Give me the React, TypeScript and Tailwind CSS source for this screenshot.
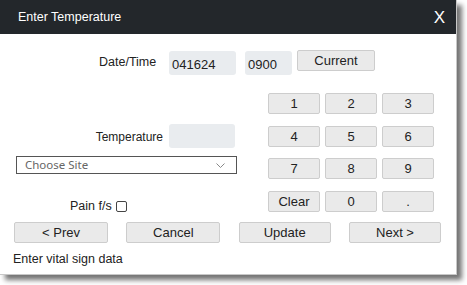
import React from 'react';

const btn =
    'flex items-center justify-center bg-[#eaeaea] border border-[#cdcdcd] rounded-[2px] text-[13px] text-[#222] leading-none';

const App: React.FC = () => {
    const keys = ['1', '2', '3', '4', '5', '6', '7', '8', '9', 'Clear', '0', '.'];

    return (
        <div className="w-[467px] h-[285px] bg-white font-['Liberation_Sans',Arial,sans-serif]">
            <div className="w-[457px] h-[275px] bg-white border-r border-b border-[#c8c8c8] shadow-[5px_5px_5px_rgba(0,0,0,0.55)] flex flex-col">
                {/* Title bar */}
                <div className="h-[34px] bg-[#23272b] flex items-center justify-between pl-[18px] pr-[11px]">
                    <span className="text-white text-[12.5px]">Enter Temperature</span>
                    <span className="text-white text-[17px] leading-none">X</span>
                </div>

                {/* Date / time */}
                <div className="flex items-start mt-[16px]">
                    <span className="ml-[99px] mt-[4px] w-[58px] text-[12.5px] leading-[16px] text-[#222]">Date/Time</span>
                    <div className="ml-[12px] mt-[1px] w-[67px] h-[24px] rounded-[3px] bg-[#e9ecef] pl-[3px] pt-[6px] text-[13px] leading-[16px] text-[#222]">
                        041624
                    </div>
                    <div className="ml-[9px] mt-[1px] w-[47px] h-[24px] rounded-[3px] bg-[#e9ecef] pl-[3px] pt-[6px] text-[13px] leading-[16px] text-[#222]">
                        0900
                    </div>
                    <button className={`${btn} ml-[5px] w-[78px] h-[21px]`}>Current</button>
                </div>

                {/* Middle section */}
                <div className="flex mt-[18px]">
                    <div className="w-[268px]">
                        <div className="flex items-start mt-[31px]">
                            <span className="w-[163px] text-right mt-[5px] text-[12px] leading-[16px] text-[#222]">Temperature</span>
                            <div className="ml-[6px] w-[66px] h-[24px] rounded-[3px] bg-[#e9ecef]" />
                        </div>
                        <div className="ml-[16px] mt-[8px] w-[221px] h-[18px] border border-[#555] flex items-center justify-between pl-[8px] pr-[11px]">
                            <span className="font-['Noto_Sans',sans-serif] text-[11.5px] text-[#666] leading-none">Choose Site</span>
                            <svg width="9" height="5" viewBox="0 0 9 5" fill="none" stroke="#888" strokeWidth="1">
                                <path d="M0.5 0.5 L4.5 4.5 L8.5 0.5" />
                            </svg>
                        </div>
                        <div className="flex items-center mt-[24px] ml-[70px]">
                            <span className="text-[12.5px] leading-[16px] text-[#222]">Pain f/s</span>
                            <span className="ml-[4px] w-[11px] h-[11px] border border-[#444] rounded-[2px] bg-white" />
                        </div>
                    </div>
                    <div className="grid grid-cols-[52px_52px_52px] gap-x-[5px] gap-y-[9px]">
                        {keys.map((k) => (
                            <button key={k} className={`${btn} h-[21px]`}>
                                {k}
                            </button>
                        ))}
                    </div>
                </div>

                {/* Navigation buttons */}
                <div className="flex justify-between pl-[14px] pr-[15px] mt-[8px]">
                    <button className={`${btn} w-[94px] h-[21px]`}>&lt; Prev</button>
                    <button className={`${btn} w-[94px] h-[21px]`}>Cancel</button>
                    <button className={`${btn} w-[92px] h-[21px]`}>Update</button>
                    <button className={`${btn} w-[92px] h-[21px]`}>Next &gt;</button>
                </div>

                <div className="ml-[13px] mt-[8px] text-[12.5px] leading-[16px] text-[#222]">Enter vital sign data</div>
            </div>
        </div>
    );
};

export default App;
